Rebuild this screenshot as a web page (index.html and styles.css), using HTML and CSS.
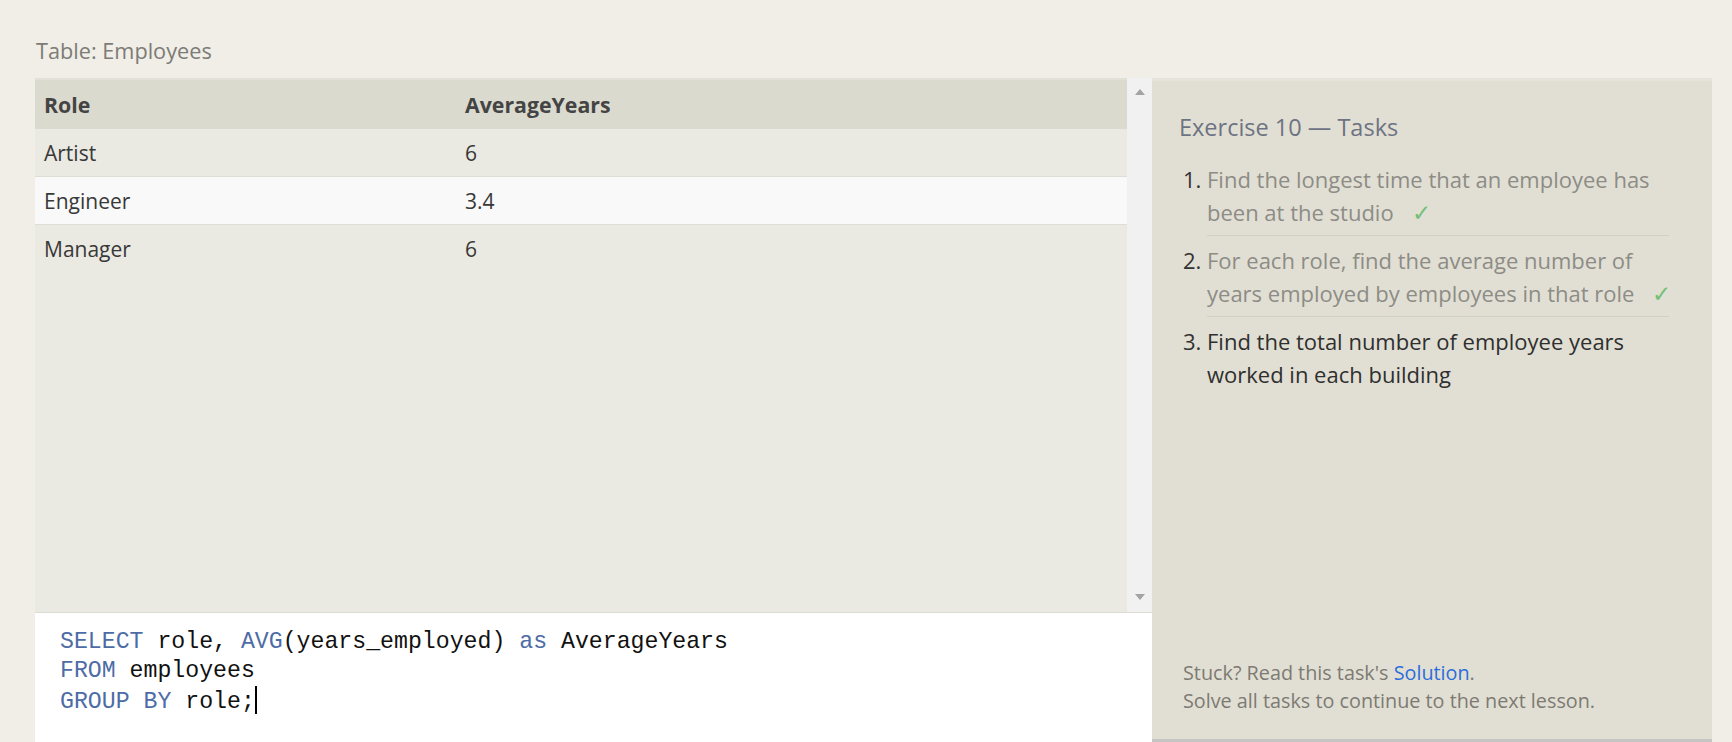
FILE: index.html
```html
<!DOCTYPE html>
<html>
<head>
<meta charset="utf-8">
<link rel="stylesheet" href="styles.css">
</head>
<body>
<div class="page">
  <div class="caption">Table: Employees</div>
  <div class="main">
    <div class="left">
      <div class="results">
        <div class="table-wrap">
          <div class="row head"><div class="c1">Role</div><div class="c2">AverageYears</div></div>
          <div class="row"><div class="c1">Artist</div><div class="c2">6</div></div>
          <div class="row alt"><div class="c1">Engineer</div><div class="c2">3.4</div></div>
          <div class="row"><div class="c1">Manager</div><div class="c2">6</div></div>
        </div>
        <div class="scrollbar"><span class="arrow up"></span><span class="arrow down"></span></div>
      </div>
      <div class="editor"><pre class="code"><span class="kw">SELECT</span> role, <span class="kw">AVG</span>(years_employed) <span class="kw">as</span> AverageYears
<span class="kw">FROM</span> employees
<span class="kw">GROUP BY</span> role;<span class="cursor"></span></pre></div>
    </div>
    <div class="right">
      <div class="panel">
        <div class="title">Exercise 10 — Tasks</div>
        <ol class="tasks">
          <li class="task done"><span class="num">1.</span><div class="body">Find the longest time that an employee has been at the <span class="nowrap">studio<span class="check">✓</span></span></div></li>
          <li class="task done"><span class="num">2.</span><div class="body">For each role, find the average number of years employed by employees in that <span class="nowrap">role<span class="check">✓</span></span></div></li>
          <li class="task current"><span class="num">3.</span><div class="body">Find the total number of employee years worked in each building</div></li>
        </ol>
        <div class="footer">
          <div>Stuck? Read this task's <a class="link">Solution</a>.</div>
          <div>Solve all tasks to continue to the next lesson.</div>
        </div>
      </div>
      <div class="bar"></div>
    </div>
  </div>
</div>
</body>
</html>
```

FILE: styles.css
```css
html, body {
  margin: 0;
  padding: 0;
  background: #f0eee6;
  overflow: hidden;
  height: 742px;
}
.page {
  padding: 36px 20px 0 35px;
  font-family: "Open Sans", "Noto Sans", sans-serif;
}
.caption {
  font-size: 21.7px;
  line-height: 30px;
  color: #7c7b77;
  margin-bottom: 12px;
  padding-left: 1px;
}
.main {
  display: flex;
  height: 664px;
}
.left {
  width: 1117px;
  display: flex;
  flex-direction: column;
}
.results {
  height: 534px;
  display: flex;
}
.table-wrap {
  flex: 1;
  background: #eae9e2;
}
.row {
  display: grid;
  grid-template-columns: 421px 1fr;
  height: 47px;
  align-items: center;
  font-size: 21px;
  color: #383838;
}
.row .c1, .row .c2 {
  padding-left: 9px;
}
.row.head {
  height: 51px;
  background: #dbdacf;
  font-weight: 700;
  font-size: 21.3px;
  color: #444;
  border-top: 2px solid #e2e1d8;
  box-sizing: border-box;
}
.row.alt {
  background: #f9f9f9;
  border-top: 1px solid #deddd6;
  border-bottom: 1px solid #deddd6;
}
.scrollbar {
  width: 25px;
  background: #f1f1f1;
  display: flex;
  flex-direction: column;
  justify-content: space-between;
  align-items: center;
  padding: 11px 0 12px;
  box-sizing: border-box;
}
.arrow {
  width: 0;
  height: 0;
  border-left: 5.5px solid transparent;
  border-right: 5.5px solid transparent;
}
.arrow.up { border-bottom: 6px solid #a3a3a3; }
.arrow.down { border-top: 6px solid #a3a3a3; }
.editor {
  flex: 1;
  background: #fff;
  border-top: 1px solid #dddcd4;
  padding: 15px 24px 0 25px;
}
.code {
  margin: 0;
  font-family: "Liberation Mono", "DejaVu Sans Mono", monospace;
  font-size: 23.2px;
  line-height: 29px;
  color: #111;
}
.kw { color: #4d6ca6; }
.cursor {
  display: inline-block;
  width: 2px;
  height: 28px;
  background: #000;
  vertical-align: -6px;
}
.right {
  flex: 1;
  display: flex;
  flex-direction: column;
}
.panel {
  flex: 1;
  background: #e1dfd4;
  border-top: 3px solid #e5e3db;
  padding: 30px 43px 24px 27px;
  display: flex;
  flex-direction: column;
}
.title {
  font-size: 23.5px;
  line-height: 32px;
  color: #6e7382;
}
.tasks {
  list-style: none;
  margin: 12px 0 0;
  padding: 0 0 0 4px;
}
.task {
  display: flex;
  font-size: 22px;
  line-height: 33px;
}
.num {
  width: 24px;
  color: #333;
  flex: none;
  padding-top: 8px;
}
.body {
  flex: 1;
  padding: 8px 0 6px;
  border-bottom: 1px solid #d2d0c6;
}
.task:last-child .body { border-bottom: none; }
.task.done .body { color: #8d8c86; }
.task.current .body { color: #2f2f2f; }
.nowrap {
  white-space: nowrap;
  margin-right: -40px;
}
.check {
  display: inline-block;
  line-height: 1;
  color: #72c077;
  margin-left: 18px;
  font-size: 23px;
}
.footer {
  margin-top: auto;
  padding-left: 4px;
  font-size: 19.8px;
  line-height: 28px;
  color: #7d7a73;
}
.link { color: #2d6ddb; }
.bar {
  height: 3px;
  background: #c5c5c3;
}
```
